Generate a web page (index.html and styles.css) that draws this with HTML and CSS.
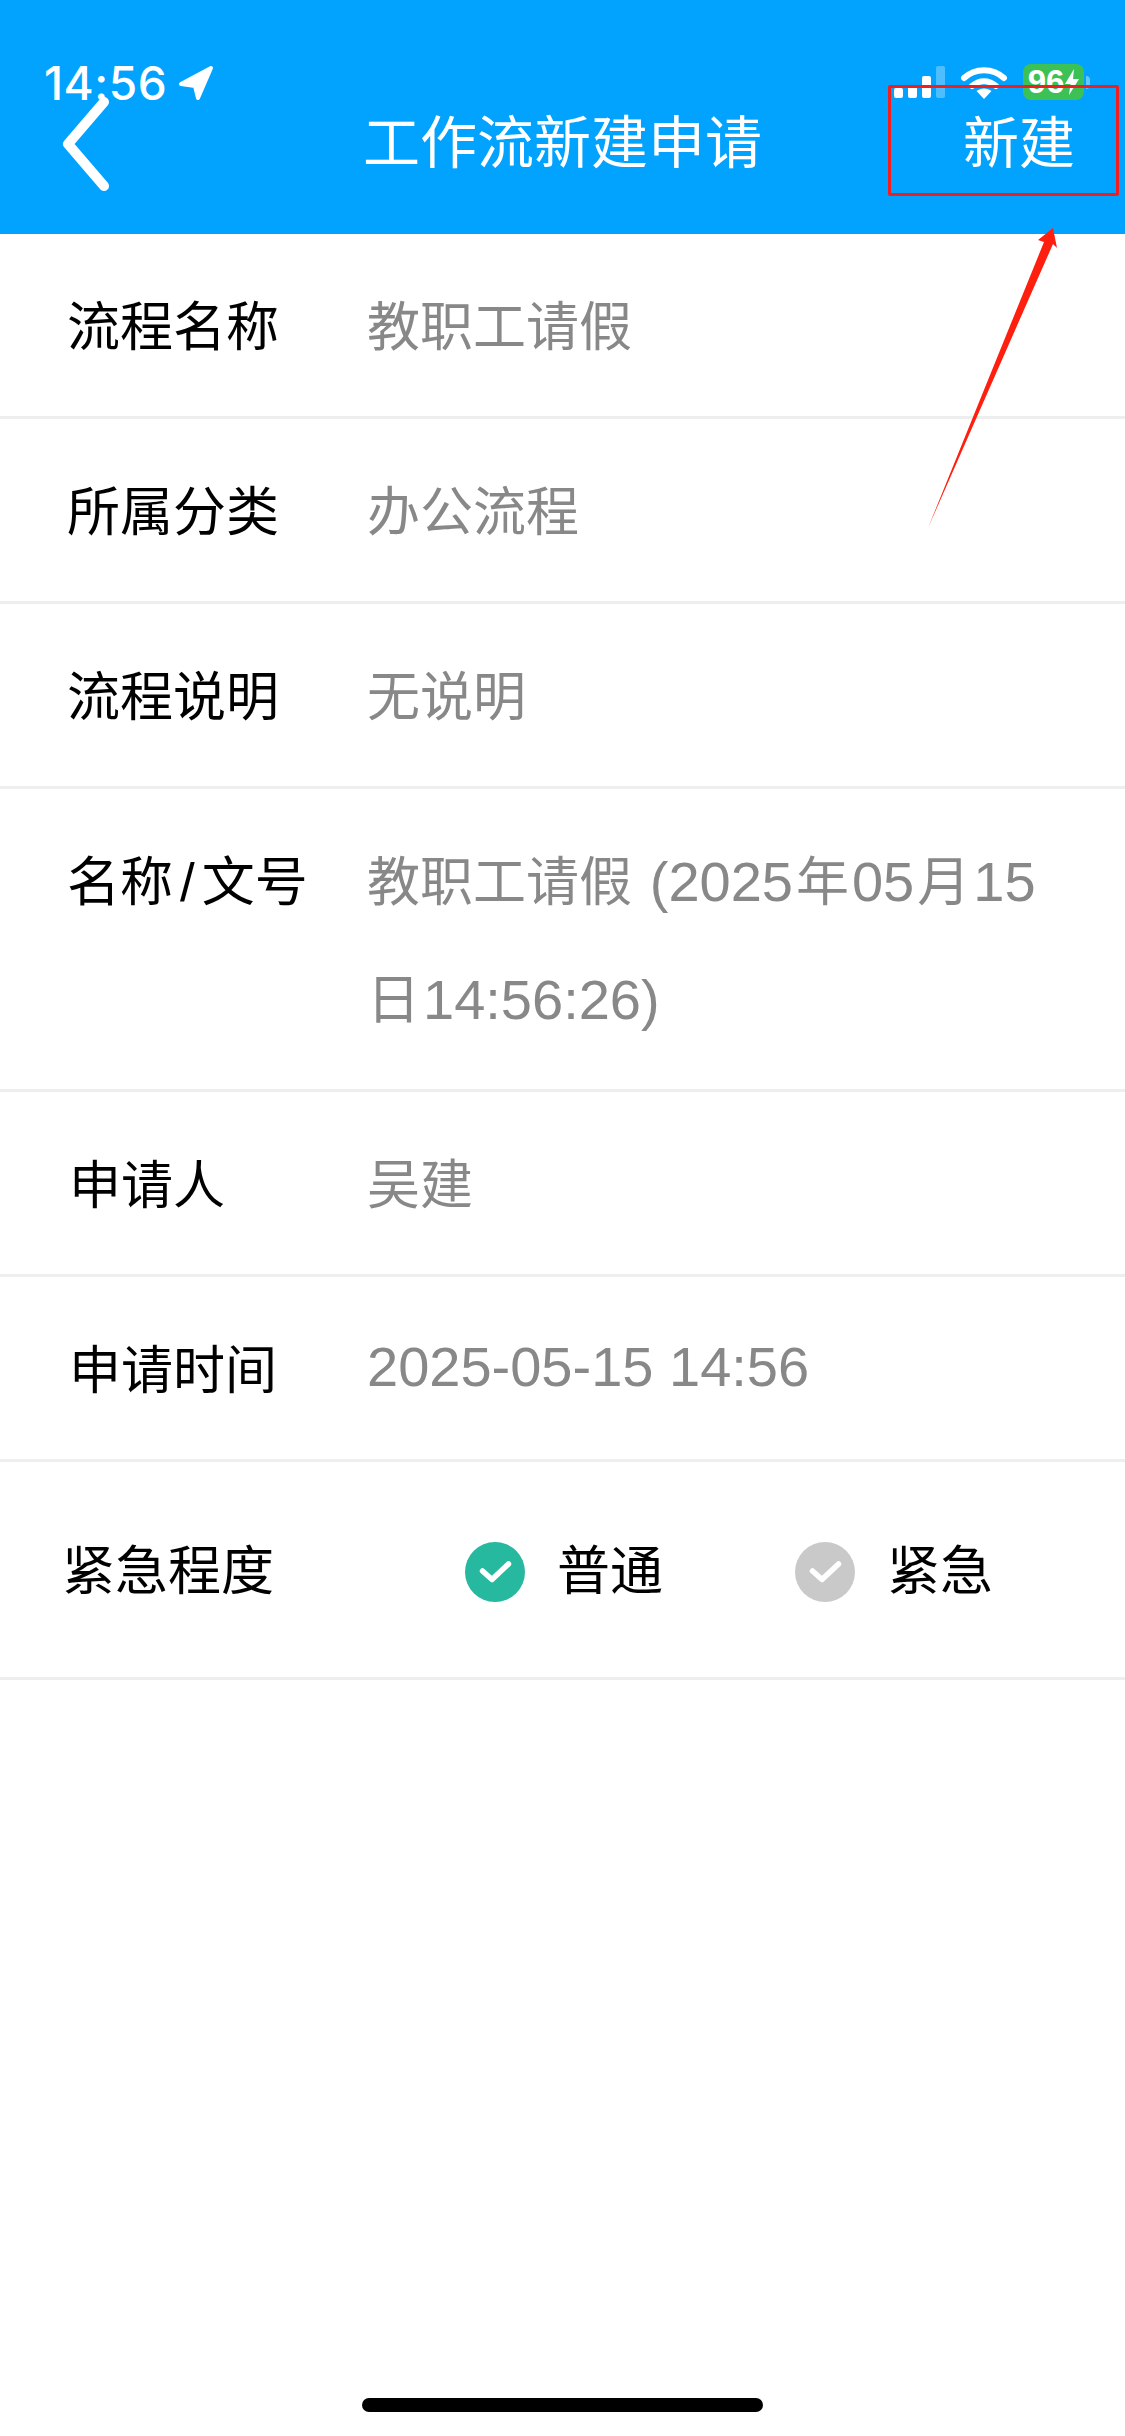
FILE: index.html
```html
<!DOCTYPE html>
<html lang="zh-CN">
<head>
  <meta charset="UTF-8">
  <title>工作流新建申请</title>
  <link rel="stylesheet" href="styles.css">
</head>
<body>
  <div class="page">
    <div class="status-bar">
      <div class="status-left">
        <span class="status-time">14:56</span>
        <svg class="status-arrow" viewBox="0 0 36 36"><polygon points="33,3 3,19 17,21 20,33" fill="#fff" stroke="#fff" stroke-width="4" stroke-linejoin="round"/></svg>
      </div>
      <div class="status-right">
        <div class="signal">
          <span class="signal-bar bar-1"></span>
          <span class="signal-bar bar-2"></span>
          <span class="signal-bar bar-3"></span>
          <span class="signal-bar bar-4"></span>
        </div>
        <svg class="wifi" viewBox="0 0 46 33">
          <path d="M3 12C14 1.500 32 1.500 43 12" fill="none" stroke="#fff" stroke-width="6" stroke-linecap="round"/>
          <path d="M11 20c7-6.500 17-6.500 24 0" fill="none" stroke="#fff" stroke-width="6" stroke-linecap="round"/>
          <path d="M23 33l-7.500-8c4-3.500 11-3.500 15 0z" fill="#fff"/>
        </svg>
        <div class="battery">
          <div class="battery-body">
            <span class="battery-num">96</span>
            <svg class="battery-bolt" viewBox="0 0 14 26"><path d="M9 0L0 15h5.500L4 26l10-16H8z" fill="#fff"/></svg>
          </div>
          <span class="battery-nub"></span>
        </div>
      </div>
    </div>

    <div class="header">
      <div class="header-back">
        <svg class="back-icon" viewBox="0 0 48 94"><path d="M42 5L6 47l36 42" fill="none" stroke="#fff" stroke-width="10" stroke-linecap="round" stroke-linejoin="round"/></svg>
      </div>
      <div class="header-title">工作流新建申请</div>
      <div class="header-action">新建</div>
    </div>

    <div class="form">
      <div class="row">
        <div class="row-label">流程名称</div>
        <div class="row-value">教职工请假</div>
      </div>
      <div class="row">
        <div class="row-label">所属分类</div>
        <div class="row-value">办公流程</div>
      </div>
      <div class="row">
        <div class="row-label">流程说明</div>
        <div class="row-value">无说明</div>
      </div>
      <div class="row">
        <div class="row-label">名称<span class="slash">/</span>文号</div>
        <div class="row-value">教职工请假 <span class="latin">(2025</span>年<span class="latin">05</span>月<span class="latin">15</span>日<span class="latin">14:56:26)</span></div>
      </div>
      <div class="row">
        <div class="row-label row-label-short">申请人</div>
        <div class="row-value">吴建</div>
      </div>
      <div class="row">
        <div class="row-label row-label-short">申请时间</div>
        <div class="row-value row-value-date"><span class="latin">2025-05-15 14:56</span></div>
      </div>
      <div class="row row-urgency">
        <div class="urgency-label">紧急程度</div>
        <div class="option">
          <svg class="option-check" viewBox="0 0 60 60"><circle cx="30" cy="30" r="30" fill="#26b99f"/><path d="M17.500 29L27 37.500 43.500 22" fill="none" stroke="#fff" stroke-width="5.500" stroke-linecap="round" stroke-linejoin="round"/></svg>
          <span>普通</span>
        </div>
        <div class="option">
          <svg class="option-check" viewBox="0 0 60 60"><circle cx="30" cy="30" r="30" fill="#c9c9c9"/><path d="M17.500 29L27 37.500 43.500 22" fill="none" stroke="#fff" stroke-width="5.500" stroke-linecap="round" stroke-linejoin="round"/></svg>
          <span>紧急</span>
        </div>
      </div>
    </div>

    <div class="home-bar"></div>

    <!-- red annotation drawn on top of the screenshot -->
    <div class="mark-box"></div>
    <svg class="mark-arrow" viewBox="0 0 1125 2436"><polygon points="928,528 1044,242 1038,240 1053,228 1057,248 1053,244" fill="#ff1f0f"/></svg>
  </div>
</body>
</html>
```

FILE: styles.css
```css
body {
  margin: 0;
  background-color: #fff;
  font-family: "Liberation Sans", "Noto Sans CJK SC", sans-serif;
}
.page {
  position: relative;
  width: 1125px;
  height: 2436px;
  display: flex;
  flex-direction: column;
  overflow: hidden;
}

/* status bar sits over the blue header */
.status-bar {
  position: absolute;
  top: 64px;
  left: 44px;
  right: 35px;
  display: flex;
  justify-content: space-between;
  align-items: flex-start;
  color: #fff;
}
.status-left {
  display: flex;
  align-items: center;
  gap: 11px;
}
.status-time {
  font-family: Inter, "Liberation Sans", sans-serif;
  font-size: 46px;
  font-weight: 500;
  line-height: 38px;
  letter-spacing: 0.5px;
}
.status-arrow {
  width: 36px;
  height: 36px;
}
.status-right {
  display: flex;
  align-items: center;
  gap: 16px;
}
.signal {
  display: flex;
  align-items: flex-end;
  gap: 5px;
  height: 32px;
}
.signal-bar {
  width: 9px;
  background-color: #fff;
  border-radius: 2px;
}
.bar-1 { height: 10px; }
.bar-2 { height: 12px; }
.bar-3 { height: 22px; }
.bar-4 { height: 32px; opacity: 0.3; }
.wifi {
  width: 46px;
  height: 33px;
}
.battery {
  display: flex;
  align-items: center;
  gap: 2px;
}
.battery-body {
  width: 61px;
  height: 36px;
  background-color: #3cc157;
  border-radius: 8px;
  display: flex;
  align-items: center;
  justify-content: center;
  gap: 1px;
}
.battery-num {
  font-size: 33px;
  font-weight: bold;
  line-height: 36px;
}
.battery-bolt {
  width: 14px;
  height: 26px;
}
.battery-nub {
  width: 4px;
  height: 13px;
  background-color: rgba(255, 255, 255, 0.4);
  border-radius: 0 4px 4px 0;
}

.header {
  height: 186px;
  padding-top: 48px;
  background-color: #02a3ff;
  display: grid;
  grid-template-columns: 1fr auto 1fr;
  align-items: center;
  color: #fff;
}
.header-back {
  padding-left: 62px;
  display: flex;
}
.back-icon {
  width: 48px;
  height: 94px;
  margin-top: 6px;
}
.header-title {
  font-size: 57px;
  line-height: 80px;
  padding-top: 3px;
}
.header-action {
  font-size: 56px;
  line-height: 80px;
  text-align: right;
  padding: 6px 50px 0 0;
}

.row {
  display: flex;
  padding: 35px 0 29px;
  border-bottom: 3px solid #eee;
  font-size: 53px;
  line-height: 118px;
}
.row-label {
  box-sizing: border-box;
  flex: none;
  width: 367px;
  padding-left: 67px;
  color: #000;
}
.row-label-short {
  padding-left: 69px;
  font-size: 52px;
}
.slash {
  margin: 0 7px;
}
.row-value {
  flex: 1;
  padding-right: 50px;
  color: #888;
}
.latin {
  font-size: 56px;
  line-height: 1;
  margin: 0 3px;
}
.row-value-date {
  margin-top: -3px;
}
.row-value-date .latin {
  margin: 0;
}
.row-urgency {
  padding: 51px 0 46px;
  align-items: center;
}
.urgency-label {
  flex: none;
  width: 402px;
  padding-left: 62px;
  color: #000;
}
.option {
  flex: none;
  width: 330px;
  display: flex;
  align-items: center;
  gap: 32px;
  color: #000;
}
.option-check {
  width: 60px;
  height: 60px;
  margin-left: 1px;
}

.home-bar {
  width: 401px;
  height: 14px;
  margin: auto auto 24px;
  background-color: #000;
  border-radius: 7px;
}

.mark-box {
  position: absolute;
  left: 888px;
  top: 85px;
  width: 225px;
  height: 105px;
  border: 3px solid #f01e1e;
  border-radius: 2px;
}
.mark-arrow {
  position: absolute;
  left: 0;
  top: 0;
  width: 1125px;
  height: 2436px;
  pointer-events: none;
}
```
